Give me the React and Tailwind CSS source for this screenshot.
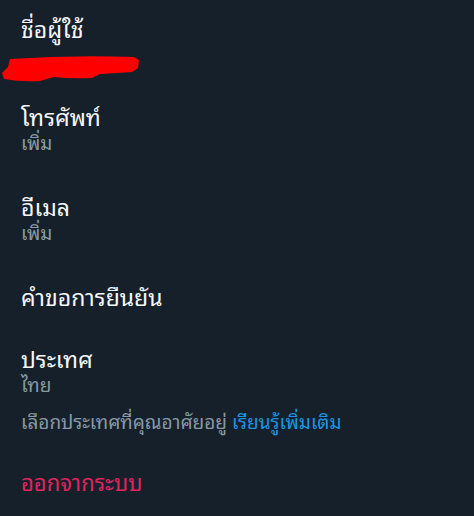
export default function App() {
  return (
    <div className="w-[474px] h-[516px] bg-[#16202b] overflow-hidden" style={{ fontFamily: '"Noto Sans Thai Looped", Tahoma, "Leelawadee UI", "Noto Sans", "Noto Sans Thai", "Liberation Sans", sans-serif' }}>
      <div className="px-[21px] pt-[13px]">
        <div className="relative h-[70px]">
          <div className="text-[23px] leading-[30px] text-[#f5f8fa]">ชื่อผู้ใช้</div>
          <svg className="absolute left-[-21px] top-[40px]" width="150" height="32" viewBox="0 0 150 32">
            <path d="M10 6 Q70 2 134 4 L139 7 L138 15 L132 19 Q118 20 100 21 L92 25 Q70 26 54 24 L40 28 Q20 29 4 26 L2 20 L8 14 Z" fill="#ff0000" />
          </svg>
        </div>
        <div className="flex flex-col">
          <div className="h-[90px] pt-[20px]">
            <div className="text-[23px] leading-[26px] text-[#f5f8fa]">โทรศัพท์</div>
            <div className="text-[19px] leading-[26px] text-[#8899a6]">เพิ่ม</div>
          </div>
          <div className="h-[90px] pt-[20px]">
            <div className="text-[23px] leading-[26px] text-[#f5f8fa]">อีเมล</div>
            <div className="text-[19px] leading-[26px] text-[#8899a6]">เพิ่ม</div>
          </div>
          <div className="h-[62px] pt-[20px]">
            <div className="text-[23px] leading-[26px] text-[#f5f8fa]">คำขอการยืนยัน</div>
          </div>
          <div className="pt-[20px]">
            <div className="text-[23px] leading-[26px] text-[#f5f8fa]">ประเทศ</div>
            <div className="text-[19px] leading-[26px] text-[#8899a6]">ไทย</div>
            <div className="mt-[12px] text-[19px] leading-[24px] text-[#8899a6]">
              เลือกประเทศที่คุณอาศัยอยู่ <span className="text-[#1b95e0]">เรียนรู้เพิ่มเติม</span>
            </div>
          </div>
          <div className="mt-[35px] text-[22px] leading-[26px] text-[#e0245e]">ออกจากระบบ</div>
        </div>
      </div>
    </div>
  );
}
